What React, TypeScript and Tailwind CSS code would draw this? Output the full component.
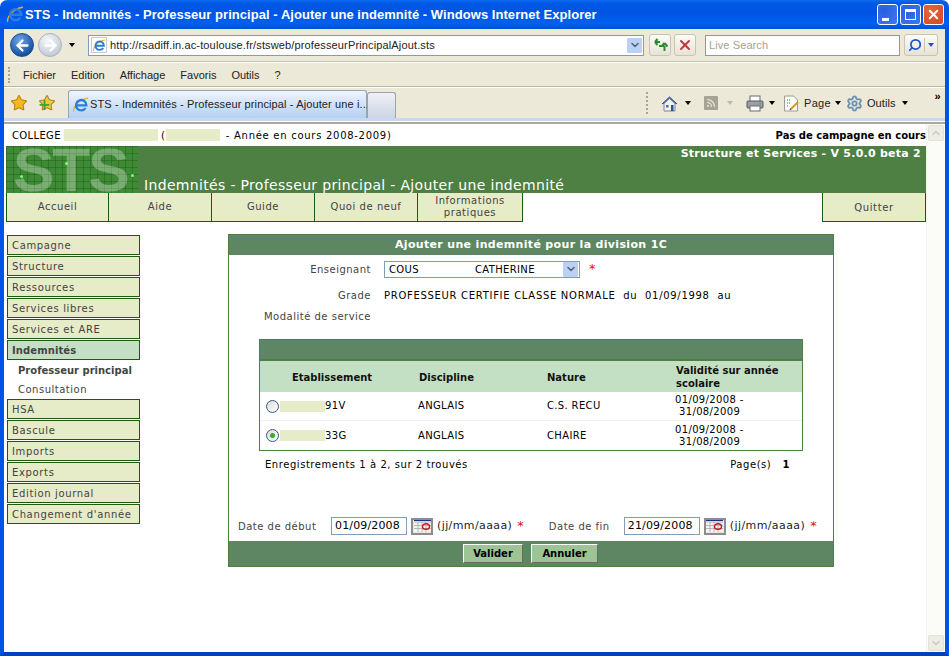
import { ArrowLeft, ArrowRight, ChevronDown, Rss, Search, Settings, Star, X } from 'lucide-react'
import type { ReactNode } from 'react'

const menuItems = ['Fichier', 'Edition', 'Affichage', 'Favoris', 'Outils', '?']
const topTabs = [
  { label: 'Accueil', width: 'w-[103px]' },
  { label: 'Aide', width: 'w-[103px]' },
  { label: 'Guide', width: 'w-[103px]' },
  { label: 'Quoi de neuf', width: 'w-[103px]' },
  { label: 'Informations pratiques', width: 'w-[105px]' }
]
const sideBefore = ['Campagne', 'Structure', 'Ressources', 'Services libres', 'Services et ARE']
const sideAfter = ['HSA', 'Bascule', 'Imports', 'Exports', 'Edition journal', "Changement d'année"]
const rows = [
  { code: '91V', nature: 'C.S. RECU', checked: false },
  { code: '33G', nature: 'CHAIRE', checked: true }
]

function IeLogo({ size = 16 }: { size?: number }) {
  return (
    <svg width={size} height={size} viewBox="0 0 16 16" className="shrink-0">
      <path d="M.8 14.800C-.5 11.500 5 2.500 15 1.200" fill="none" stroke="#f0b030" strokeWidth="1.300" />
      <path d="M12.600 11A5.200 5.200 0 1 1 13.400 8.300H3.500" fill="none" stroke="#2a7fdc" strokeWidth="2.300" />
    </svg>
  )
}

function StsLogo() {
  return (
    <svg width="132" height="47" viewBox="0 0 132 47" className="block shrink-0">
      <defs>
        <pattern id="sts-grid" width="7" height="7" patternUnits="userSpaceOnUse">
          <path d="M0 .5h7M.5 0v7" stroke="#1d5a18" strokeOpacity=".45" fill="none" />
        </pattern>
      </defs>
      <rect width="132" height="47" fill="#3f8a35" />
      <rect width="132" height="47" fill="url(#sts-grid)" />
      <text x="7" y="45" fontFamily="Liberation Sans" fontSize="62" fontWeight="700" letterSpacing="-2" fill="#fff" fillOpacity=".3">
        STS
      </text>
      <circle cx="60.500" cy="17.500" r="1.500" fill="#7cff6a" />
      <circle cx="15.500" cy="30.500" r="1.500" fill="#7cff6a" />
      <circle cx="126.500" cy="29.500" r="1.500" fill="#7cff6a" />
    </svg>
  )
}

function Caret({ className = 'border-t-black' }: { className?: string }) {
  return <span className={`inline-block h-0 w-0 border-x-[3.5px] border-t-[4px] border-x-transparent ${className}`} />
}

function ComboArrow() {
  return (
    <span className="flex h-[15px] w-[15px] items-center justify-center rounded-[1px] bg-[#bcd0f4]">
      <ChevronDown size={12} strokeWidth={3} className="text-[#4d6185]" />
    </span>
  )
}

function ToolButton({ children, className = 'w-[22px]' }: { children: ReactNode; className?: string }) {
  return (
    <div className={`flex h-[22px] items-center justify-center rounded-[3px] border border-[#c9c5b2] bg-[linear-gradient(180deg,#fbfbf8,#e6e3d6)] ${className}`}>
      {children}
    </div>
  )
}

function Redacted({ className }: { className: string }) {
  return <span className={`inline-block bg-[#e6ebc8] align-middle ${className}`} />
}

function CalendarButton() {
  return (
    <span className="flex h-[17px] w-[22px] items-center justify-center border-2 border-[#8d8d8d] bg-[#ece9d8]">
      <svg width="17" height="12" viewBox="0 0 17 12">
        <rect width="17" height="12" fill="#f4f4f4" />
        <path d="M0 .5h17" stroke="#1f2f8f" />
        <path d="M0 2h17M0 5.500h17M0 8.500h17M4 2v10M8 2v10M12 2v10" stroke="#a8a8a8" strokeWidth=".8" />
        <ellipse cx="12" cy="6.500" rx="3.500" ry="2.800" fill="none" stroke="#d01020" strokeWidth="1.400" />
      </svg>
    </span>
  )
}

function SideItem({ label, active = false }: { label: string; active?: boolean }) {
  return (
    <div
      className={`flex h-5 items-center border border-[#1d5a10] pl-[4px] text-[10px] text-[#444] ${
        active ? 'bg-[#c4e0c4] font-bold tracking-[0.1px]' : 'bg-[#e6ebc8] tracking-[0.65px]'
      }`}
    >
      {label}
    </div>
  )
}

function DateField({ label, value, labelWidth }: { label: string; value: string; labelWidth: string }) {
  return (
    <div className="flex items-center">
      <span className={`text-[10px] tracking-[0.5px] text-[#444] ${labelWidth}`}>{label}</span>
      <span className="flex h-[18px] w-[76px] items-center border border-[#7f9db9] pl-[3px] text-[11px] tracking-[0.15px] text-black">
        {value}
      </span>
      <span className="ml-[4px]">
        <CalendarButton />
      </span>
      <span className="ml-[4px] text-[11px] tracking-[0.4px] text-[#222]">(jj/mm/aaaa)</span>
      <span className="ml-[5px] text-[13px] text-[#e01010]">*</span>
    </div>
  )
}

export default function App() {
  return (
    <div className="flex h-[656px] w-[949px] flex-col overflow-hidden bg-white font-['DejaVu_Sans',sans-serif]">
      {/* title bar */}
      <div className="flex h-[29px] shrink-0 items-center rounded-t-[7px] bg-[linear-gradient(180deg,#0a6cf0_0%,#0058e6_12%,#0054e3_45%,#0060f0_80%,#0050d8_100%)] pl-[7px] pr-[5px]">
        <IeLogo size={17} />
        <span className="ml-px whitespace-nowrap font-['Liberation_Sans',sans-serif] text-[13px] font-bold tracking-[0.05px] text-white">
          STS - Indemnités - Professeur principal - Ajouter une indemnité - Windows Internet Explorer
        </span>
        <div className="ml-auto flex gap-[2px]">
          <div className="flex h-[21px] w-[21px] items-end justify-start rounded-[3px] border border-white bg-[radial-gradient(circle_at_30%_30%,#2a5fe0,#3f78ec)] pb-[3px] pl-[4px]">
            <span className="h-[3px] w-[7px] bg-white" />
          </div>
          <div className="flex h-[21px] w-[21px] items-center justify-center rounded-[3px] border border-white bg-[radial-gradient(circle_at_30%_30%,#2a5fe0,#3f78ec)]">
            <span className="h-[11px] w-[11px] border border-t-[3px] border-white" />
          </div>
          <div className="flex h-[21px] w-[21px] items-center justify-center rounded-[3px] border border-white bg-[radial-gradient(circle_at_30%_30%,#e8643c,#d04a24)]">
            <X size={15} strokeWidth={3} className="text-white" />
          </div>
        </div>
      </div>

      <div className="flex min-h-0 flex-1 flex-col border-x-4 border-b-4 border-x-[#0054e3] border-b-[#0040c8] bg-[#ece9d8]">
        {/* address toolbar */}
        <div className="flex h-[33px] shrink-0 items-center border-b border-[#c6c3b2] pl-[6px]">
          <span className="flex h-6 w-6 items-center justify-center rounded-full border border-[#1d4f92] bg-[radial-gradient(circle_at_40%_30%,#6fa6ea,#134e9f_75%)]">
            <ArrowLeft size={17} strokeWidth={3.2} className="text-white" />
          </span>
          <span className="ml-[4px] flex h-6 w-6 items-center justify-center rounded-full border border-[#a9b2bf] bg-[radial-gradient(circle_at_40%_30%,#f7f8fa,#c0c8d4_80%)]">
            <ArrowRight size={17} strokeWidth={3.2} className="text-white" />
          </span>
          <span className="ml-[5px] flex w-[9px] justify-center">
            <Caret />
          </span>
          <div className="ml-[12px] flex h-[21px] w-[556px] items-center border border-[#7f9db9] bg-white pl-[2px] pr-[1px]">
            <span className="flex h-[16px] w-[16px] items-center justify-center border border-[#c8c8c8]">
              <IeLogo size={13} />
            </span>
            <span className="ml-[3px] font-['Liberation_Sans',sans-serif] text-[11px] tracking-[0.14px] text-[#222]">
              http://rsadiff.in.ac-toulouse.fr/stsweb/professeurPrincipalAjout.sts
            </span>
            <span className="ml-auto">
              <ComboArrow />
            </span>
          </div>
          <div className="ml-[5px]">
            <ToolButton>
              <svg width="16" height="14" viewBox="0 0 16 14">
                <path d="M8 4H3M3 4l2.500-3M3 4l2.500 3" fill="none" stroke="#2f8a2f" strokeWidth="2" />
                <path d="M7 8h5.500M12.500 13V8M12.500 5l-3 3.500M12.500 5l3 3.500" fill="none" stroke="#2f8a2f" strokeWidth="2" />
              </svg>
            </ToolButton>
          </div>
          <div className="ml-[3px]">
            <ToolButton>
              <X size={16} strokeWidth={3} className="text-[#c2373a]" />
            </ToolButton>
          </div>
          <div className="ml-[9px] flex h-[21px] w-[195px] items-center border border-[#7f9db9] bg-white pl-[3px] font-['Liberation_Sans',sans-serif] text-[11px] tracking-[0.1px] text-[#a5a296]">
            Live Search
          </div>
          <div className="ml-[4px]">
            <ToolButton className="w-[34px]">
              <span className="flex w-[21px] justify-center border-r border-[#c9c5b2]">
                <Search size={14} strokeWidth={3} className="-scale-x-100 text-[#1a55d0]" />
              </span>
              <span className="flex w-[12px] justify-center">
                <Caret className="border-t-[#1a55d0]" />
              </span>
            </ToolButton>
          </div>
        </div>

        {/* menu bar */}
        <div className="flex h-[25px] shrink-0 items-center border-b border-t border-b-[#b8b5a4] border-t-white pl-[4px] pt-px font-['Liberation_Sans',sans-serif] text-[11px] text-[#222]">
          <span className="h-[16px] w-[2px] border-l-2 border-dotted border-[#a8a596]" />
          <div className="ml-[13px] flex gap-[15px]">
            {menuItems.map(item => (
              <span key={item}>{item}</span>
            ))}
          </div>
        </div>

        {/* tab row */}
        <div className="flex h-[31px] shrink-0 items-end border-t border-t-white pl-[6px]">
          <div className="mb-[6px] flex shrink-0 gap-[10px]">
            <Star size={18} fill="#f5b81e" strokeWidth={1.4} className="text-[#c07e10]" />
            <div className="relative">
              <Star size={18} fill="#f5c83a" strokeWidth={1.4} className="text-[#a88620]" />
              <span className="absolute left-0 top-[5px] text-[15px] leading-[12px] font-bold text-[#35a835]">+</span>
            </div>
          </div>
          <div className="ml-[12px] flex h-[28px] w-[299px] shrink-0 items-center rounded-t-[3px] border border-b-0 border-[#99a4ad] bg-[linear-gradient(180deg,#eef5fd,#b4d0f2)] pl-[4px]">
            <IeLogo />
            <span className="ml-px whitespace-nowrap font-['Liberation_Sans',sans-serif] text-[11px] tracking-[0.12px] text-[#222]">
              STS - Indemnités - Professeur principal - Ajouter une i...
            </span>
          </div>
          <div className="h-[26px] w-[29px] shrink-0 rounded-t-[3px] border border-b-0 border-[#99a4ad] bg-[linear-gradient(180deg,#f1f1f4,#ccd4e6)]" />

          <div className="mb-[3px] ml-[250px] flex h-[24px] shrink-0 items-center font-['Liberation_Sans',sans-serif] text-[11px] text-[#222]">
            <span className="h-[22px] w-[2px] border-l-2 border-dotted border-[#a8a596]" />
            <svg width="17" height="17" viewBox="0 0 17 17" className="ml-[13px]">
              <path d="M1 9 8.500 2 16 9" fill="#3a64c4" stroke="#2e4f9c" />
              <path d="M3 8.500v7.500h11V8.500L8.500 3.500z" fill="#f3f0e4" stroke="#7a8494" />
              <rect x="5" y="10" width="2.500" height="2.500" fill="#4a6ab0" />
              <rect x="10" y="10" width="2.500" height="6" fill="#2e4f9c" />
            </svg>
            <span className="ml-[7px] flex">
              <Caret />
            </span>
            <span className="ml-[13px] flex h-[14px] w-[14px] items-center justify-center rounded-[1px] bg-[#a5a296]">
              <Rss size={10} strokeWidth={3} className="text-[#e9e6d8]" />
            </span>
            <span className="ml-[9px] flex">
              <Caret className="border-t-[#bdbaa9]" />
            </span>
            <svg width="18" height="17" viewBox="0 0 18 17" className="ml-[13px]">
              <rect x="4" y="1" width="10" height="6" fill="#fff" stroke="#6b6b6b" />
              <rect x="1" y="6" width="16" height="7" rx="1" fill="#9aa0a6" stroke="#55595e" />
              <rect x="4" y="11" width="10" height="5" fill="#fff" stroke="#6b6b6b" />
              <rect x="13" y="8" width="2" height="1.500" fill="#39c339" />
            </svg>
            <span className="ml-[5px] flex">
              <Caret />
            </span>
            <svg width="17" height="17" viewBox="0 0 17 17" className="ml-[8px]">
              <path d="M1.500 1h9l4 4v11h-13z" fill="#fbfbf6" stroke="#9c9c94" />
              <path d="M4 5h3M4 8h3M4 11h2" stroke="#4a6ab0" strokeDasharray="1 1" />
              <path d="m8 14 7-7" stroke="#d09a28" strokeWidth="2" />
              <path d="m7 15 1-1.500" stroke="#444" strokeWidth="1.200" />
            </svg>
            <span className="ml-[4px] tracking-[0.3px]">Page</span>
            <span className="ml-[4px] flex">
              <Caret />
            </span>
            <Settings size={17} strokeWidth={2.6} className="ml-[5px] text-[#6d8fb0]" />
            <span className="ml-[4px] tracking-[0.1px]">Outils</span>
            <span className="ml-[6px] flex">
              <Caret />
            </span>
            <span className="mb-[14px] ml-[27px] text-[11px] leading-[10px] font-bold tracking-[-1px] text-black">»</span>
          </div>
        </div>
        <div className="h-[4px] shrink-0 border-b border-white bg-[#c9d7f1]" />

        {/* page */}
        <div className="flex min-h-0 flex-1 border-t-2 border-[#aca899] bg-white">
          <div className="min-w-0 flex-1 pl-[2px]">
            <div className="flex h-[22px] items-center justify-between pl-[6px] text-[10px] text-black">
              <div className="flex items-center">
                <span className="tracking-[0.36px]">COLLEGE</span>
                <Redacted className="ml-[3px] h-[12px] w-[94px]" />
                <span className="ml-[3px]">(</span>
                <Redacted className="ml-px h-[12px] w-[54px]" />
                <span className="ml-[6px] tracking-[0.72px]">- Année en cours 2008-2009)</span>
              </div>
              <span className="font-bold">Pas de campagne en cours</span>
            </div>

            <div className="flex h-[47px] bg-[#4e7f43] text-white">
              <StsLogo />
              <div className="flex min-w-0 flex-1 flex-col pl-[6px]">
                <div className="pr-[5px] pt-[1px] text-right text-[11px] leading-[14px] font-bold tracking-[0.25px]">
                  Structure et Services - V 5.0.0 beta 2
                </div>
                <div className="mt-auto text-[14px] leading-[16px] tracking-[0.33px]">
                  Indemnités - Professeur principal - Ajouter une indemnité
                </div>
              </div>
            </div>

            <div className="flex h-[29px] justify-between">
              <div className="flex">
                {topTabs.map(tab => (
                  <div
                    key={tab.label}
                    className={`flex items-center justify-center border-b border-r border-[#1d5a10] bg-[#e6ebc8] px-[8px] text-center text-[10px] leading-[12px] tracking-[0.55px] text-[#444] first:border-l ${tab.width}`}
                  >
                    {tab.label}
                  </div>
                ))}
              </div>
              <div className="flex w-[104px] items-center justify-center border-x border-b border-[#1d5a10] bg-[#e6ebc8] text-[10px] tracking-[0.65px] text-[#444]">
                Quitter
              </div>
            </div>

            <div className="flex pl-[1px] pt-[12px]">
              <nav className="flex w-[133px] shrink-0 flex-col gap-px pt-px">
                {sideBefore.map(item => (
                  <SideItem key={item} label={item} />
                ))}
                <SideItem label="Indemnités" active />
                <div className="flex h-[19px] items-center pl-[11px] text-[10px] font-bold text-[#444]">Professeur principal</div>
                <div className="flex h-[17px] items-center pl-[11px] text-[10px] tracking-[0.5px] text-[#444]">Consultation</div>
                {sideAfter.map(item => (
                  <SideItem key={item} label={item} />
                ))}
              </nav>

              <main className="ml-[88px] flex h-[333px] w-[606px] flex-col border border-[#4e7f43]">
                <div className="flex h-[20px] shrink-0 items-center justify-center bg-[#5e8662] text-[11px] font-bold tracking-[0.33px] text-white">
                  Ajouter une indemnité pour la division 1C
                </div>

                <div className="flex h-[28px] items-center">
                  <span className="w-[142px] text-right text-[10px] tracking-[0.5px] text-[#444]">Enseignant</span>
                  <div className="ml-[13px] flex h-[17px] w-[196px] items-center border border-[#7f9db9] pl-[4px] pr-[1px] text-[10px] tracking-[0.35px] text-black">
                    <span className="w-[86px]">COUS</span>
                    <span>CATHERINE</span>
                    <span className="ml-auto">
                      <ComboArrow />
                    </span>
                  </div>
                  <span className="ml-[9px] text-[13px] text-[#e01010]">*</span>
                </div>

                <div className="mt-[5px] flex h-[14px] items-center text-[10px]">
                  <span className="w-[142px] text-right tracking-[0.5px] text-[#444]">Grade</span>
                  <span className="ml-[13px] tracking-[0.7px] text-black">
                    PROFESSEUR CERTIFIE CLASSE NORMALE&nbsp; du&nbsp; 01/09/1998&nbsp; au
                  </span>
                </div>

                <div className="mt-[7px] flex h-[14px] items-center text-[10px]">
                  <span className="w-[142px] text-right tracking-[0.5px] text-[#444]">Modalité de service</span>
                </div>

                <div className="ml-[30px] mt-[16px] w-[544px] border border-[#4e7f43] text-[10px]">
                  <div className="h-[21px] border-b-2 border-[#4e7f43] bg-[#5e8662]" />
                  <div className="grid h-[31px] grid-cols-[156px_128px_129px_129px] items-center bg-[#c4e0c4] pt-px font-bold leading-[13px] text-[#111]">
                    <span className="pr-[12px] text-center">Etablissement</span>
                    <span className="pl-[3px]">Discipline</span>
                    <span className="pl-[3px]">Nature</span>
                    <span className="pl-[3px]">Validité sur année scolaire</span>
                  </div>
                  {rows.map(row => (
                    <div
                      key={row.code}
                      className="grid h-[29px] grid-cols-[156px_128px_129px_129px] items-center border-b border-[#eeeeee] leading-[12px] tracking-[0.35px] text-black last:border-b-0"
                    >
                      <div className="flex items-center pl-[6px]">
                        <span className="flex h-[13px] w-[13px] items-center justify-center rounded-full border border-[#2f5a8f] bg-[linear-gradient(135deg,#dcdcd6,#ffffff)]">
                          {row.checked && <span className="h-[5px] w-[5px] rounded-full bg-[#2fb02f]" />}
                        </span>
                        <Redacted className="ml-[1px] h-[11px] w-[45px]" />
                        <span>{row.code}</span>
                      </div>
                      <span className="pl-[2px]">ANGLAIS</span>
                      <span className="pl-[3px]">{row.nature}</span>
                      <div className="pl-[2px]">
                        <div>01/09/2008 -</div>
                        <div className="pl-[4px]">31/08/2009</div>
                      </div>
                    </div>
                  ))}
                </div>

                <div className="ml-[36px] mt-[6px] flex h-[14px] w-[525px] items-center justify-between text-[10px] tracking-[0.55px] text-black">
                  <span>Enregistrements 1 à 2, sur 2 trouvés</span>
                  <span>
                    Page(s)&nbsp;&nbsp; <b>1</b>
                  </span>
                </div>

                <div className="ml-[9px] mt-auto flex h-[18px] items-center gap-[25px]">
                  <DateField label="Date de début" value="01/09/2008" labelWidth="w-[93px]" />
                  <DateField label="Date de fin" value="21/09/2008" labelWidth="w-[75px]" />
                </div>

                <div className="mt-[6px] flex h-[25px] shrink-0 items-center justify-center gap-[8px] bg-[#5e8662] pr-[1px]">
                  <span className="flex h-[19px] w-[60px] items-center justify-center border border-b-[#6b6b60] border-l-white border-r-[#6b6b60] border-t-white bg-[#9cc494] text-[10px] font-bold text-black">
                    Valider
                  </span>
                  <span className="flex h-[19px] w-[67px] items-center justify-center border border-b-[#6b6b60] border-l-white border-r-[#6b6b60] border-t-white bg-[#9cc494] text-[10px] font-bold text-black">
                    Annuler
                  </span>
                </div>
              </main>
            </div>
          </div>

          {/* scrollbar, disabled */}
          <div className="flex w-[19px] shrink-0 flex-col justify-between border-l border-[#f2f1ea] bg-[#fbfbf8] px-px py-px">
            <span className="flex h-[16px] w-[16px] items-center justify-center rounded-[2px] border border-[#e4e2d6] bg-[#eeede5]">
              <ChevronDown size={12} strokeWidth={3} className="rotate-180 text-[#cfcdc0]" />
            </span>
            <span className="flex h-[16px] w-[16px] items-center justify-center rounded-[2px] border border-[#e4e2d6] bg-[#eeede5]">
              <ChevronDown size={12} strokeWidth={3} className="text-[#cfcdc0]" />
            </span>
          </div>
        </div>
      </div>
    </div>
  )
}
